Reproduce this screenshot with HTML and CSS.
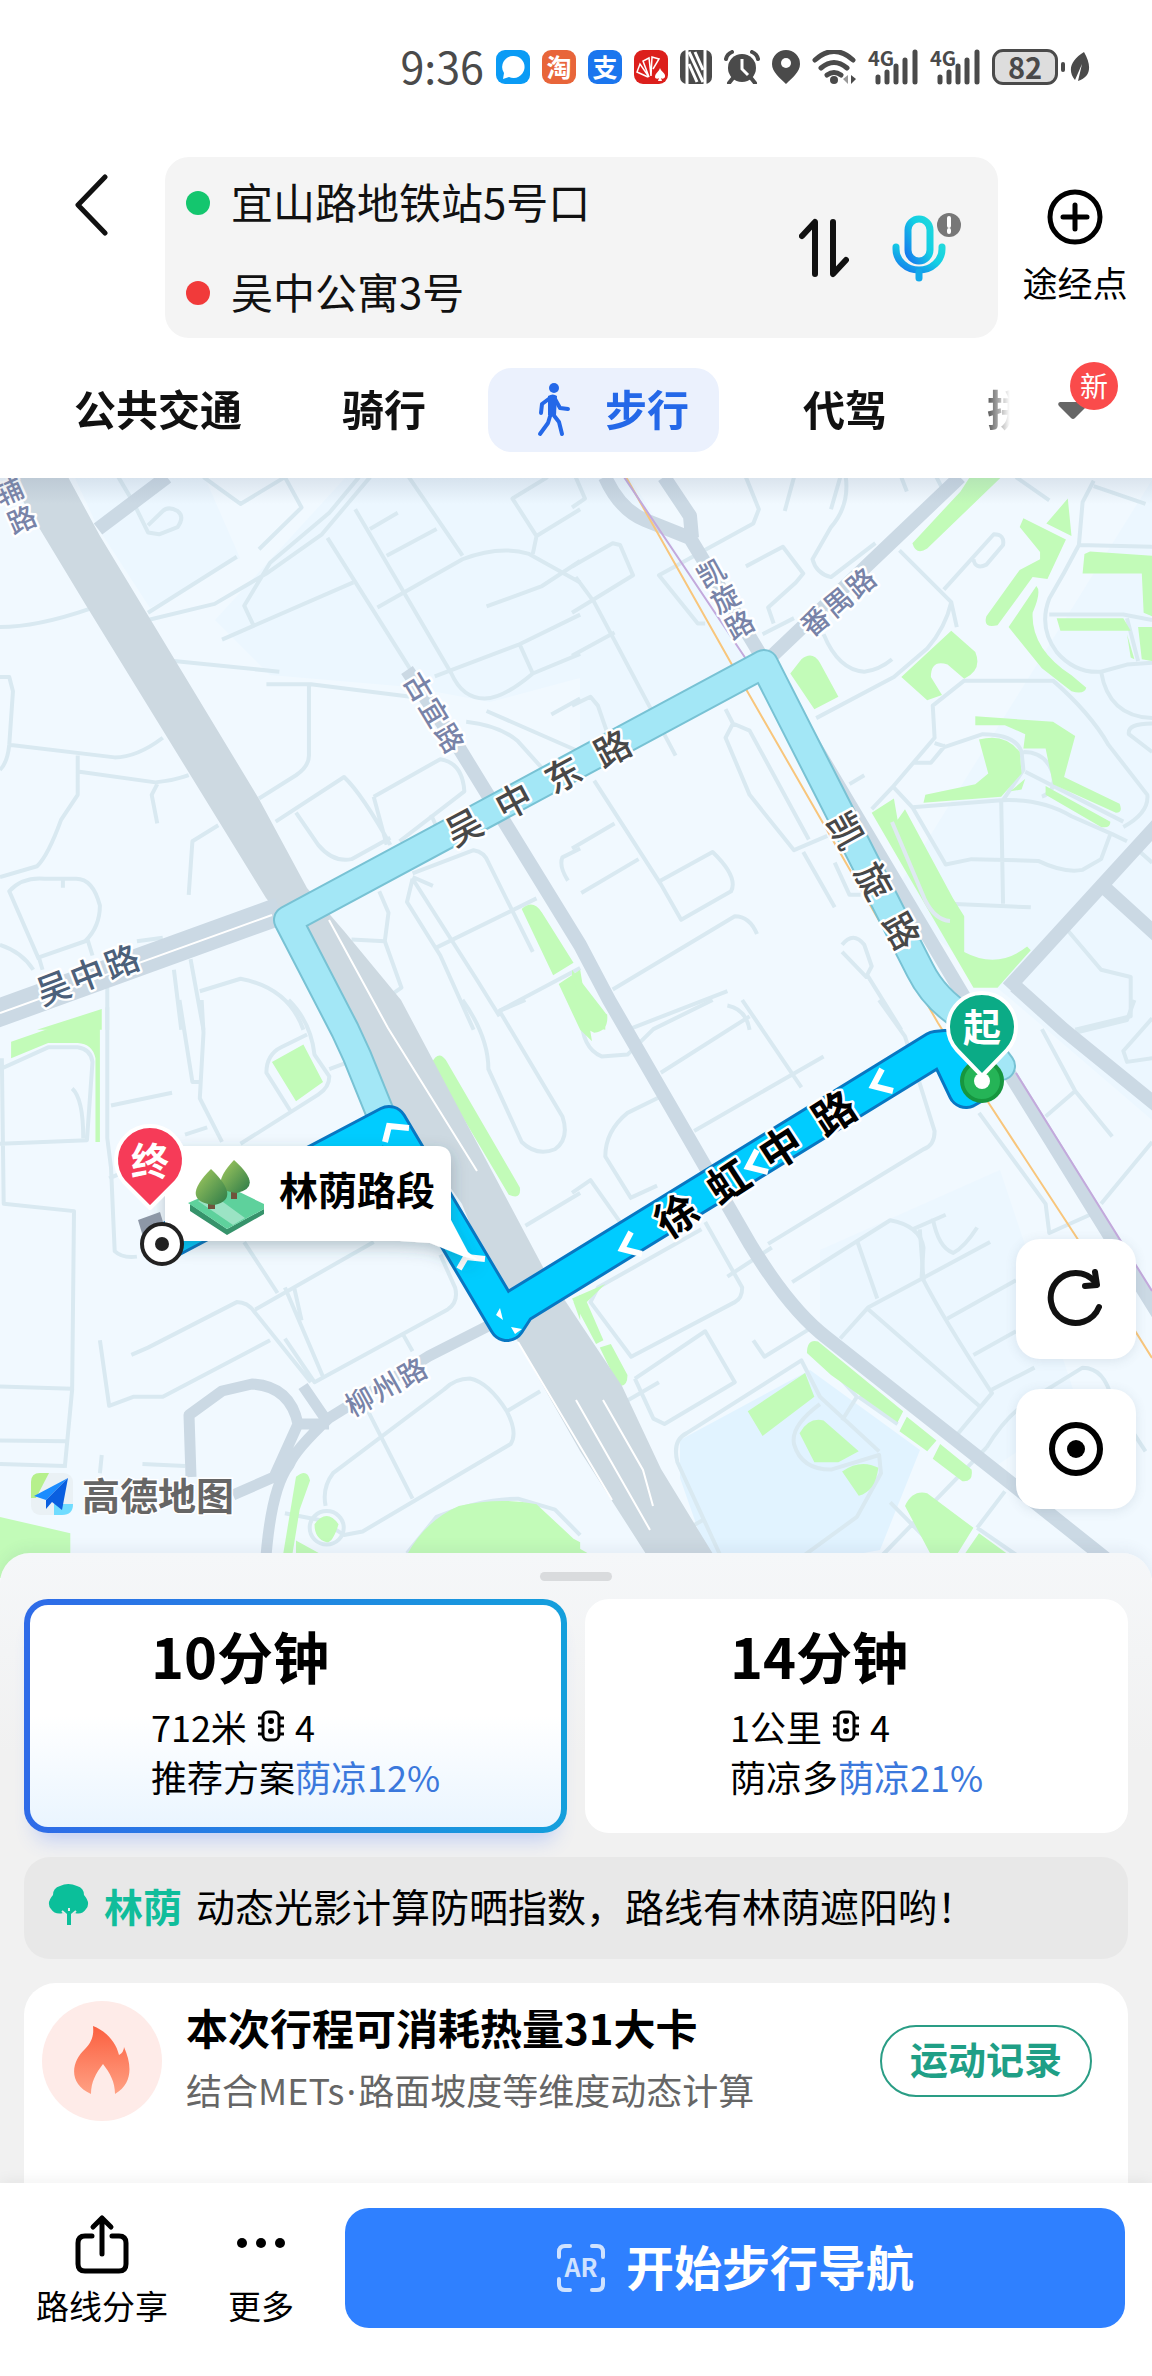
FILE: index.html
```html
<!DOCTYPE html>
<html lang="zh-CN">
<head>
    <meta charset="UTF-8">
    <meta name="viewport" content="width=device-width, initial-scale=1.0">
    <title>步行路线</title>
    <link rel="stylesheet" href="styles.css">
</head>
<body>

<div class="status-bar">
    <span class="status-time">9:36</span>
    <svg class="app-icon" viewBox="0 0 34 34"><rect width="34" height="34" rx="9" fill="#0a9bf5"/><path d="M17 6a11 11 0 1 1-4 21l-6 2 1-6A11 11 0 0 1 17 6z" fill="#fff"/></svg>
    <svg class="app-icon" viewBox="0 0 34 34"><rect width="34" height="34" rx="9" fill="#e8653a"/><text x="17" y="16" class="app-char">淘</text></svg>
    <svg class="app-icon" viewBox="0 0 34 34"><rect width="34" height="34" rx="9" fill="#1b76ee"/><text x="17" y="16" class="app-char">支</text></svg>
    <svg class="app-icon" viewBox="0 0 34 34"><rect width="34" height="34" rx="9" fill="#dc1f1c"/><path d="M14 27 3 22l3-8 9 13-6-16 6-3 2 18 1-19 7 2-6 10" fill="none" stroke="#fff" stroke-width="1.5"/><path d="M26 18c1 4 6 5 5 9-1 2-3 2-4 1l1 3h-4l1-3c-1 1-4 1-4-1 0-4 4-5 5-9z" fill="#fff"/></svg>
    <svg class="nfc-icon" viewBox="0 0 32 34"><rect width="32" height="34" rx="7" fill="#4a4a4a"/><path d="M7 0v34M25 0v34" stroke="#fff" stroke-width="3"/><path d="M9 2l14 30M9 14l8 18M15 2l8 18" stroke="#fff" stroke-width="3"/></svg>
    <svg class="alarm-icon" viewBox="0 0 36 34"><circle cx="18" cy="18" r="14" fill="#4a4a4a"/><path d="m9 28-4 5m22-5 4 5M2 9q1-5 6-7m26 7q-1-5-6-7" stroke="#4a4a4a" stroke-width="4" stroke-linecap="round" fill="none"/><path d="M18 9v10l6 6" stroke="#fff" stroke-width="3" fill="none"/></svg>
    <svg class="pin-icon" viewBox="0 0 28 34"><path d="M14 0a14 14 0 0 1 14 14c0 8-8 14-14 20C8 28 0 22 0 14A14 14 0 0 1 14 0z" fill="#4a4a4a"/><circle cx="14" cy="13" r="5" fill="#fff"/></svg>
    <svg class="wifi-icon" viewBox="0 0 44 34"><g fill="none" stroke="#4a4a4a" stroke-width="5" stroke-linecap="round"><path d="M3 10q19-17 38 0M9 18q13-11 26 0M15 25q7-5 14 0"/></g><circle cx="22" cy="30" r="4" fill="#4a4a4a"/><path d="m36 25-5 4 5 5z" fill="#999"/><path d="m39 25 5 4-5 5z" fill="#4a4a4a"/></svg>
    <svg class="signal-icon" viewBox="0 0 50 34"><text x="0" y="16" class="signal-text">4G</text><path d="M10 27v5M19 22v10M28 16v16M37 10v22M47 2v30" stroke="#4a4a4a" stroke-width="5" stroke-linecap="round"/></svg>
    <svg class="signal-icon" viewBox="0 0 50 34"><text x="0" y="16" class="signal-text">4G</text><path d="M10 27v5M19 22v10M28 16v16M37 10v22M47 2v30" stroke="#4a4a4a" stroke-width="5" stroke-linecap="round"/></svg>
    <span class="battery">82</span>
    <svg class="leaf-icon" viewBox="0 0 20 30"><path d="M14 0c8 14 7 25-6 29l4-17-7 16C-3 18 1 8 14 0z" fill="#4a4a4a"/></svg>
</div>

<header class="header">
    <div class="search-row">
        <button class="back-button" aria-label="返回">
            <svg width="36" height="64" viewBox="0 0 36 64"><path d="M33 4 6 32l27 28" fill="none" stroke="#111" stroke-width="5" stroke-linecap="round" stroke-linejoin="round"/></svg>
        </button>
        <div class="search-box">
            <div class="places">
                <label class="place"><span class="dot dot-start"></span><input type="text" aria-label="起点" value="宜山路地铁站5号口"></label>
                <label class="place"><span class="dot dot-end"></span><input type="text" aria-label="终点" value="吴中公寓3号"></label>
            </div>
            <button class="swap-button" aria-label="交换起终点">
                <svg width="50" height="60" viewBox="0 0 50 60"><path d="M3 18 16 4v52M47 42 34 56V4" fill="none" stroke="#111" stroke-width="6" stroke-linecap="round" stroke-linejoin="round"/></svg>
            </button>
            <button class="mic-button" aria-label="语音输入">
                <svg width="74" height="72" viewBox="0 0 74 72">
                    <defs>
                        <linearGradient id="mic" x1="0" y1="1" x2="1" y2="0"><stop offset="0" stop-color="#1677ee"/><stop offset=".6" stop-color="#12cfe4"/><stop offset="1" stop-color="#20d8dc"/></linearGradient>
                    </defs>
                    <rect x="21" y="7" width="22" height="42" rx="11" fill="none" stroke="url(#mic)" stroke-width="7"/>
                    <path d="M9 35v2a23 21 0 0 0 46 0v-2" fill="none" stroke="url(#mic)" stroke-width="7" stroke-linecap="round"/>
                    <path d="M32 60v6" stroke="#12a9ea" stroke-width="7" stroke-linecap="round"/>
                    <circle cx="62" cy="13" r="12" fill="#777"/>
                    <path d="M62 6v8M62 18v2" stroke="#fff" stroke-width="4" stroke-linecap="round"/>
                </svg>
            </button>
        </div>
        <button class="waypoint-button">
            <svg width="56" height="56" viewBox="0 0 56 56"><circle cx="28" cy="28" r="25" fill="none" stroke="#000" stroke-width="5"/><path d="M28 16v24M16 28h24" stroke="#000" stroke-width="5" stroke-linecap="round"/></svg>
            <span>途经点</span>
        </button>
    </div>

    <nav class="tabs">
        <div class="tab-list">
            <button class="tab">公共交通</button>
            <button class="tab">骑行</button>
            <button class="tab tab-active">
                <svg width="36" height="54" viewBox="0 0 36 54"><circle cx="18" cy="5" r="5" fill="#2468e8"/><path d="M14 15 6 21 5 30M19 16l5 9 8 1M15 30l-3 10-8 11M16 30l7 9 3 12" fill="none" stroke="#2468e8" stroke-width="4" stroke-linecap="round" stroke-linejoin="round"/><path d="M12 13q5-3 9 0l-1 19h-8z" fill="#2468e8"/></svg>
                <span>步行</span>
            </button>
            <button class="tab">代驾</button>
            <button class="tab">拼车</button>
        </div>
        <button class="tab-more" aria-label="更多出行方式">
            <svg width="32" height="18" viewBox="0 0 32 18"><path d="M3 1h26q3 1 1 4L18 17q-2 2-4 0L2 5Q0 2 3 1z" fill="#666"/></svg>
            <span class="new-badge">新</span>
        </button>
    </nav>
</header>

<main>
    <div class="map-area">
        <svg class="map" viewBox="0 478 1152 1100" role="img" aria-label="步行路线地图">
            <defs>
                <linearGradient id="topShade" x1="0" y1="0" x2="0" y2="1"><stop offset="0" stop-color="#8090a8" stop-opacity=".2"/><stop offset="1" stop-color="#8090a8" stop-opacity="0"/></linearGradient>
                <linearGradient id="treeFill" x1="0" y1="0" x2="1" y2="1"><stop offset="0" stop-color="#a6cc5f"/><stop offset="1" stop-color="#2c7a48"/></linearGradient>
                <filter id="shadow" x="-20%" y="-30%" width="140%" height="180%"><feDropShadow dx="0" dy="6" stdDeviation="8" flood-color="#345" flood-opacity=".3"/></filter>
            </defs>
            <rect x="0" y="478" width="1152" height="1100" fill="#f1f9ff"/>

            <!-- blocks -->
            <g fill="#ecf7ff">
                <path d="M75 478h130l35 80-90 50-52-80zM215 620l130-142h235v200l-90 24-80-15-140-12z"/>
                <path d="M580 478h50l120 190-170 80zM890 900l262-420v640l-140-120z"/>
                <path d="M820 1250l180-80 80 240-90 60-170-140z"/>
            </g>
            <path d="M680 1440 810 1370l110 80-40 100-150 28h-15l-35-100z" fill="#e1f3ff"/>

            <!-- north west tile -->
            <g class="minor" transform="translate(0 470) scale(.37 .357)">
                <path d="M320 20 360 90 400 175 430 180 480 160Q500 130 480 115 455 100 440 115L400 155"/>
                <path d="M550 20 650 95 770 20 815 105 700 222M400 420 580 375 720 290 870 180 1000 20M970 20 890 120 730 260 660 380 685 435M400 400 640 243M600 475 955 315"/>
                <path d="M960 110 1220 570Q1250 640 1310 640 1360 640 1440 570L1568 515M885 190 1110 560M1105 20 1250 240M1000 165 1075 120M1045 240 1180 165M1020 385 1250 250Q1350 210 1430 235L1568 315M1315 382 1465 325 1568 255M1175 578 1400 490 1568 405M1405 490 1440 570M1440 235 1450 185 1568 110M1450 185 1385 80 1480 20"/>
                <path d="M0 440Q100 440 240 390M470 535 755 565M720 600 840 600 1110 635M835 605V800Q835 830 800 855L700 920M0 580H25L35 620 25 770Q20 820 0 840M30 770 310 805Q370 805 440 750M210 800V910L165 980Q130 1080 100 1110L0 1140M215 845 420 875Q470 870 510 855M425 880 410 910 425 990"/>
                <path d="M1260 705Q1350 715 1400 760L1465 835M1315 675 1568 790M1490 685 1568 640M745 985 930 860Q980 910 1055 1050M800 960 860 1050Q900 1100 950 1090L1055 1030M1010 915 1190 810Q1250 820 1255 900L1080 1040M1010 915 1045 1050M590 995 520 1040 510 1190M1165 965 1180 1000"/>
                <path d="M105 1370 25 1180Q60 1140 120 1145H200Q250 1140 270 1220 270 1280 230 1320L105 1365M170 1150V1170M0 1330Q60 1350 90 1400M235 1310 250 1360M105 1365 115 1400M370 1320 440 1310M470 1400 490 1568M515 1370 550 1568M540 1460 650 1425Q780 1450 820 1568M290 1450V1568"/>
                <path d="M1025 1180 1050 1240 1040 1320 1085 1450 1050 1475M950 1315 1040 1320M1115 1140 1170 1165M1115 1145 1290 1430 1350 1530M1115 1145 1100 1210 1190 1360 1280 1568M1115 1130 1280 1065Q1310 1070 1320 1100L1440 1350M1175 1340 1450 1200M1350 1515 1568 1395M1568 1060 1520 1085Q1510 1110 1535 1150"/>
            </g>

            <!-- north east tile -->
            <g class="minor" transform="translate(572 470) scale(.37 .357)">
                <path d="M0 270 110 205 130 210 165 295 0 400M10 300 60 370 280 800M0 520 115 455M10 20 35 80 0 105M470 20 505 110 490 150 235 295 340 430 360 430M470 270 570 215 625 290 605 315 530 385 545 430M600 20 575 115M700 110 725 20M740 20Q750 100 700 160L650 250Q660 290 700 300L820 205M515 460 600 415M680 460Q720 560 790 565 830 560 865 530M890 20 905 60M985 20 1000 50M1200 20 1290 85"/>
                <path d="M885 225 1025 370Q1010 440 960 500L870 580 660 695M1025 370 1040 440M1005 335 1140 180Q1170 180 1165 210L1120 265Q1090 280 1085 250M1410 30 1380 90 1370 210Q1330 290 1290 360 1260 440 1310 510 1360 570 1430 565L1500 545 1568 540M1410 45 1550 95M1370 210 1568 215M1290 405H1490L1568 420M1500 415 1530 535M1430 565Q1450 690 1568 695M1568 710Q1500 710 1505 740L1568 790"/>
                <path d="M810 950 865 890 980 750 975 660 1060 590H1300Q1400 680 1450 770L1555 910Q1560 960 1490 1000M980 765 1010 775 1110 740Q1200 740 1215 790L1220 840 1165 925M925 820 970 820 1010 770M870 890 920 945 1160 925Q1270 920 1350 970L1460 1020 1500 1040M920 945 1010 1105 1080 1090 1260 1095Q1330 1130 1380 1120L1430 1090 1455 1020M1160 925 1165 1215M1220 790Q1280 790 1300 850 1310 900 1270 915M1225 845 1490 985M1020 1215 1240 1225M1525 1060 1568 1100"/>
                <path d="M0 660 50 635 70 660 100 750M60 870 240 1160 295 1260 430 1180Q450 1140 380 1070L240 1150M0 1060 115 990M25 1185 180 1090M110 1455 440 1250Q480 1250 500 1300M420 1500Q470 1510 480 1568M150 1568 420 1460M415 670 435 710 415 750 480 910 600 1065 690 1025M435 710 480 730 640 1035M625 1070 710 1225M710 1100 750 1190 780 1190M790 855 750 880M730 1330Q760 1290 790 1330L810 1390 795 1420 730 1350M795 1410 890 1568M1340 1290 1430 1400 1510 1420V1530L1360 1568"/>
            </g>

            <!-- south west tile -->
            <g class="minor" transform="translate(0 1000) scale(.37 .364)">
                <path d="M0 190 130 130H210Q245 135 250 170L235 385 0 395M5 160 10 560 200 580 195 1070 175 1285M0 1062 195 1068M0 1210 180 1212M0 1275 175 1280M195 243Q225 270 225 380M290 20V380L300 460 310 690Q330 710 370 705M485 0 520 225H540M545 0 550 90 540 270 600 390M300 290 465 255M500 370 560 350M295 490 340 470"/>
                <path d="M780 0Q840 60 850 150L890 210Q890 240 860 260L650 395M785 305 720 200Q720 150 760 130L830 95M890 190 930 175M355 975 400 955 640 830Q670 830 690 860L840 1050M690 850 1010 665M660 665 750 805M770 790 875 1040M795 790 815 880M270 935 295 1115 360 1090H440L730 935M770 930 850 1050 1210 850Q1240 830 1230 790L1190 700M1090 920 1115 965M275 1250 270 1300M385 1275 500 1280M770 1410 870 1430 930 1470 980 1460 1380 1220Q1400 1190 1370 1130L1460 1075M1370 1130Q1320 1050 1270 1040 1230 1040 1200 1070L900 1300Q870 1340 880 1390M985 1110 1115 1370M1100 1520 1180 1420Q1300 1370 1400 1370L1500 1400 1568 1470"/>
                <path d="M1250 0Q1320 100 1320 190L1410 390Q1450 430 1500 410 1540 380 1520 320L1350 30 1420 0M1420 620 1568 530"/>
                <circle cx="883" cy="1450" r="46"/>
            </g>

            <!-- south east tile -->
            <g class="minor" transform="translate(572 1000) scale(.37 .364)">
                <path d="M25 20Q20 130 80 155L150 150 220 80 380 0M460 0 620 240M240 200 480 45M160 545 90 430Q90 360 150 310L240 265M330 360 680 155M155 545 230 510M0 530 50 495 130 610M830 0 900 100 980 360Q980 400 950 410L530 670M595 775 860 605Q940 620 950 680L945 760Q1000 870 1135 1080L1040 1195M725 930 800 845 1130 665M795 845 1100 1115M770 660 825 820M920 630 1010 590M975 600Q990 680 1030 695 1060 680 1095 625M1015 875 1200 770M1085 975 1200 910M1135 1070 1250 1010M540 680 420 760M360 610 460 790Q460 820 440 830L160 980 50 830 70 790 350 630"/>
                <path d="M150 1100 235 1050M170 1040 360 910 440 1050 250 1165 220 1150 170 1040M490 935 520 980 640 905M400 1524 285 1270Q270 1210 310 1190L620 990 670 1090 830 1240M690 1000 770 1090 730 1155M670 1110Q590 1170 600 1220 620 1290 700 1290L830 1250 835 1300 770 1420 630 1524M1120 1230Q1180 1130 1260 1085L1380 1010Q1440 1010 1460 1100L1550 1240M1120 1230 840 1524M860 1380 1000 1524M1095 1450 1170 1350M1095 1450 1200 1524M300 1460 360 1425M775 1090 880 1165M940 630 950 770"/>
                <path d="M1100 310 1280 560 1290 640 1400 590M1280 320 1360 250 1270 80M1360 250 1460 375M1430 560 1568 390M1360 90 1500 55 1520 0M1568 160 1500 170 1490 140 1568 50"/>
            </g>

            <!-- greenery -->
            <g fill="#c2fbb8">
                <path transform="translate(0 470) scale(.37 .357)" d="M1410 1230Q1440 1200 1465 1240L1550 1380 1495 1415zM1510 1440 1568 1400 1600 1600 1568 1568zM275 1510V1568H100z"/>
                <path transform="translate(572 470) scale(.37 .357)" d="M1050 60 1075 20H1160L960 220Q930 240 920 205zM1340 80 1350 185 1282 150zM1220 135 1335 195 1285 305 1245 300 1150 435Q1110 445 1120 410L1210 280 1265 250 1265 230 1210 160zM1180 440 1255 325Q1270 340 1245 400 1240 500 1350 575L1390 610Q1385 630 1350 620L1270 555zM1385 235 1400 228 1568 240V410L1545 400 1540 290H1380zM1310 415H1490L1510 450H1320zM1500 460 1520 530 1510 525zM1530 440H1568V535L1540 530zM590 570 620 530Q650 505 670 540L720 635 655 670zM890 580 1025 450 1090 510Q1110 560 1060 585L1015 545Q970 530 970 580L1000 630 960 645zM1090 690 1300 705 1360 745 1330 860 1480 935Q1490 960 1470 960L1300 880 1280 780 1220 780 1225 740 1170 715 1090 715zM1100 755Q1170 735 1210 790L1215 850 1160 915 950 932 955 910 1090 880 1125 850zM1185 900 1225 865 1215 895zM1280 885 1455 985Q1455 1005 1430 1000L1280 910zM810 960 870 920 880 980 900 950 1030 1200 1060 1250 1060 1350Q1150 1400 1230 1335L1240 1345 1150 1450H1085zM0 1400 90 1520 90 1568 50 1560 0 1420z"/>
                <path transform="translate(0 1000) scale(.37 .364)" d="M30 115 270 30V390H258V160Q250 120 210 118H130L30 160zM735 170 820 122 873 225 800 278zM1165 175Q1185 135 1205 165L1405 515Q1410 550 1375 535zM1550 830 1568 810V880zM800 1310Q830 1285 838 1320L810 1400 790 1524H765zM0 1420 190 1465V1600H0zM1100 1524Q1150 1430 1240 1390 1350 1365 1450 1385L1550 1480 1568 1490V1524zM800 1524V1485L870 1524zM850 1440Q883 1395 915 1440 900 1490 883 1490 850 1480 850 1440z"/>
                <path transform="translate(572 1000) scale(.37 .364)" d="M0 0 40 0 95 40Q100 85 60 90L40 80zM0 820 90 780 40 830 85 935 65 945zM75 955 105 945 150 1030Q150 1065 125 1060zM635 970Q635 930 665 938L895 1130 880 1160 700 1030zM905 1145 985 1210 960 1240 885 1185zM995 1220 1080 1290Q1085 1325 1055 1322L975 1260zM475 1130 630 1025 655 1090 515 1198zM615 1190Q640 1145 680 1155L775 1240 720 1270H655zM730 1295Q780 1260 828 1285 820 1350 775 1362zM900 1390Q920 1345 960 1355L1085 1450 1040 1524H970zM1100 1465 1180 1524H1060zM0 1495 50 1524H0z"/>
            </g>
            <path d="M892 822 925 900Q935 920 950 921" fill="none" stroke="#dfe9f2" stroke-width="4"/>

            <!-- main roads -->
            <path d="M9 478 87 607 266 898 289 927 370 1073 462 1204 518 1342 580 1451 646 1554 660 1580H725L713 1554 661 1469 622 1386 544 1269 401 1000 344 931 307 888 259 799 100 536 68 477z" fill="#cdd9e1"/>
            <g class="road">
                <path class="road-wide" d="M-10 1016 280 911"/>
                <path d="M98 529 167 477M407 670 459 748 580 945 609 1000 750 1244Q790 1310 827 1338L1012 1484 1135 1582"/>
                <path d="M960 477 772 656M605 477Q620 510 645 520L690 538 757 649 960 990 1009 1073 1165 1325M664 477 690 516 692 538"/>
                <path d="M1160 822 1008 988M1105 888 1160 938M1015 986 1064 1030 1160 1108"/>
                <path class="road-small" d="M492 1324 429 1356 329 1418Q295 1450 289 1465 270 1490 265 1570M329 1424 298 1424Q290 1386 252 1384L222 1391 189 1415 191 1477M298 1424 274 1477 233 1495M303 1386 329 1424"/>
            </g>
            <path d="M0 1013 272 915M329 920 388 1028 477 1171M518 1342 612 1500M576 1400 650 1530M603 1400 643 1470 653 1506" fill="none" stroke="#fff" stroke-width="2"/>
            <path d="M626 477 731 663 938 1023 988 1102 1077 1238 1152 1358" class="metro-orange"/>
            <path d="M624 477 746 659M1016 1073 1152 1291" class="metro-purple"/>

            <!-- alternative route -->
            <path class="alt-edge" d="M385 1125 357 1056 345 1030 288 920 764 664 920 970Q935 1000 965 1018L1001 1066"/>
            <path class="alt-line" d="M385 1125 357 1056 345 1030 288 920 764 664 920 970Q935 1000 965 1018L1001 1066"/>

            <!-- selected route -->
            <path class="route-edge" d="M162 1244 389 1124 507 1323 518 1306 936 1049 946 1048 966 1090 982 1081"/>
            <path class="route-line" d="M162 1244 389 1124 507 1323 518 1306 936 1049 946 1048 966 1090 982 1081"/>
            <path class="route-arrow" d="M882 1069 873 1086 893 1091M757 1150 748 1167 768 1172M631 1232 622 1249 642 1254M385 1142 389 1126 409 1128M459 1269 466 1257 485 1259"/>
            <path d="m500 1308 3 12-7-5zM511 1327l11 2-7 5z" fill="#fff"/>

            <!-- road names -->
            <g class="road-name">
                <text class="vertical" transform="translate(9 491) rotate(-24)" x="0" y="0 31">辅路</text>
                <text transform="translate(420 686) rotate(59)" x="0 30 60" y="0">古宜路</text>
                <text class="vertical" transform="translate(711 573) rotate(-29)" x="0" y="0 29 59">凯旋路</text>
                <text transform="translate(814 620) rotate(-40)" x="0 30 60" y="0">番禺路</text>
                <text transform="translate(359 1400) rotate(-29)" x="0 30 60" y="0">柳州路</text>
            </g>
            <text class="road-name-main" transform="translate(53 986) rotate(-21)" x="0 36 73" y="0">吴中路</text>
            <text class="road-name-alt" transform="translate(463 825) rotate(-28)" x="0 56 112 168" y="0">吴中东路</text>
            <text class="road-name-alt" transform="translate(848 829) rotate(61)" x="0 58 115" y="0">凯旋路</text>
            <text class="road-name-route" transform="translate(675 1213) rotate(-33)" x="0 62 124 188" y="0">徐虹中路</text>

            <!-- start pin -->
            <circle cx="982" cy="1081" r="20" fill="#25b457" stroke="#16963f" stroke-width="4"/>
            <circle cx="982" cy="1081" r="8" fill="#fff"/>
            <path d="M982 1076 957 1050A34 34 0 1 1 1007 1050z" fill="#0bab86" stroke="#fff" stroke-width="4" stroke-linejoin="round"/>
            <text class="pin-text" x="982" y="1024">起</text>

            <!-- shaded section callout -->
            <g filter="url(#shadow)">
                <path d="M181 1146H437Q451 1146 451 1160V1220L468 1252 478 1260 462 1256 430 1243 400 1241H181Q165 1241 165 1225V1162Q165 1146 181 1146z" fill="#fff"/>
            </g>
            <path d="m190 1204 37 25 37-20v5l-37 21-37-24z" fill="#36936b"/>
            <path d="m188 1203 39-17 37 18v5l-37 20z" fill="#5ed19c"/>
            <path d="m198 1201 35 24 12-7-33-24z" fill="#9be3c4"/>
            <path d="M208 1196h7v13h-7zM231 1186h6v13h-6z" fill="#70533c"/>
            <path d="M234 1160q30 27 3 33-31-3-3-33z" fill="url(#treeFill)"/>
            <path d="M211 1169q31 30 3 36-35-4-3-36z" fill="url(#treeFill)"/>
            <text class="callout-text" x="279" y="1188">林荫路段</text>

            <!-- end pin -->
            <path d="m138 1220 22-8 6 20-22 8z" fill="#8d97a6"/>
            <circle cx="162" cy="1244" r="20" fill="#fff" stroke="#222" stroke-width="4"/>
            <circle cx="162" cy="1244" r="7" fill="#222"/>
            <path d="M150 1208 124 1182A34 34 0 1 1 176 1182z" fill="#f63b58" stroke="#fff" stroke-width="4" stroke-linejoin="round"/>
            <text class="pin-text" x="150" y="1158">终</text>

            <!-- brand -->
            <rect x="31" y="1473" width="42" height="42" rx="9" fill="#eaf1f5"/>
            <path d="M40 1473h9l-13 25h-5v-16q0-9 9-9z" fill="#b6f08c"/>
            <path d="M54 1515v-11h19q0 11-11 11z" fill="#6fdcff"/>
            <path d="m68 1478-34 18 12 4z" fill="#1c8cff"/>
            <path d="m68 1478-22 22v9l6-7 10 8z" fill="#0a5fe0"/>
            <text class="brand" x="82" y="1493">高德地图</text>

            <rect x="0" y="478" width="1152" height="26" fill="url(#topShade)"/>
        </svg>
        <div class="map-controls">
            <button aria-label="刷新">
                <svg width="60" height="60" viewBox="0 0 60 60"><path d="M53 38A25 25 0 1 1 49 13" fill="none" stroke="#111" stroke-width="6" stroke-linecap="round"/><path d="m49 3 2 13-12 1" fill="none" stroke="#111" stroke-width="6" stroke-linecap="round" stroke-linejoin="round"/></svg>
            </button>
            <button aria-label="定位">
                <svg width="60" height="60" viewBox="0 0 60 60"><circle cx="30" cy="30" r="24" fill="none" stroke="#000" stroke-width="6"/><circle cx="30" cy="30" r="9" fill="#000"/></svg>
            </button>
        </div>
    </div>

    <section class="panel">
        <div class="handle"></div>

        <div class="plans">
            <button class="plan plan-active">
                <span class="plan-info">
                    <strong class="plan-time">10分钟</strong>
                    <span class="plan-line">712米
                        <svg width="28" height="32" viewBox="0 0 28 32"><rect x="6" y="2" width="16" height="28" rx="5" fill="none" stroke="#000" stroke-width="3"/><path d="M1 8h4M1 16h4M1 24h4M23 8h4M23 16h4M23 24h4" stroke="#000" stroke-width="3"/><circle cx="14" cy="11" r="3"/><circle cx="14" cy="21" r="3"/></svg>4</span>
                    <span class="plan-line">推荐方案<em>荫凉12%</em></span>
                </span>
            </button>
            <button class="plan">
                <span class="plan-info">
                    <strong class="plan-time">14分钟</strong>
                    <span class="plan-line">1公里
                        <svg width="28" height="32" viewBox="0 0 28 32"><rect x="6" y="2" width="16" height="28" rx="5" fill="none" stroke="#000" stroke-width="3"/><path d="M1 8h4M1 16h4M1 24h4M23 8h4M23 16h4M23 24h4" stroke="#000" stroke-width="3"/><circle cx="14" cy="11" r="3"/><circle cx="14" cy="21" r="3"/></svg>4</span>
                    <span class="plan-line">荫凉多<em>荫凉21%</em></span>
                </span>
            </button>
        </div>

        <div class="tip">
            <svg width="42" height="42" viewBox="0 0 42 42"><path d="M12 2q8-4 17 0 7 2 7 9 7 8 2 14-4 6-11 4-6 4-12 0-8 2-12-4-5-6 2-14 0-7 7-9z" fill="#0bbf9a"/><path d="M21 24v6M21 33l-7-6M21 33l7-6" stroke="#e8e8e8" stroke-width="2"/><path d="M21 27v14" stroke="#0bbf9a" stroke-width="4"/></svg>
            <strong>林荫</strong>
            <span>动态光影计算防晒指数，路线有林荫遮阳哟！</span>
        </div>

        <div class="calorie">
            <div class="flame">
                <svg width="58" height="70" viewBox="0 0 58 70">
                    <defs><linearGradient id="flame" x1="0" y1="0" x2="0" y2="1"><stop offset="0" stop-color="#fb5f3f"/><stop offset="1" stop-color="#ffa184"/></linearGradient></defs>
                    <path d="M20 0C33 5 43 16 46 29q5-3 5-8c8 18 9 36-9 47 0-12-5-21-12-30-7 9-12 18-12 30C-5 58-2 36 12 23 19 16 21 9 20 0z" fill="url(#flame)"/>
                </svg>
            </div>
            <div class="calorie-text">
                <h2>本次行程可消耗热量31大卡</h2>
                <p>结合METs<span class="mid-dot">·</span>路面坡度等维度动态计算</p>
            </div>
            <button class="record-button">运动记录</button>
        </div>
    </section>
</main>

<footer class="bottom-bar">
    <button class="bottom-item">
        <svg width="54" height="60" viewBox="0 0 54 60"><path d="M17 22h-7q-7 0-7 7v21q0 7 7 7h34q7 0 7-7V29q0-7-7-7h-7M27 40V4M18 13l9-9 9 9" fill="none" stroke="#000" stroke-width="5" stroke-linecap="round" stroke-linejoin="round"/></svg>
        路线分享
    </button>
    <button class="bottom-item">
        <svg width="54" height="60" viewBox="0 0 54 60"><circle cx="8" cy="29" r="5"/><circle cx="27" cy="29" r="5"/><circle cx="46" cy="29" r="5"/></svg>
        更多
    </button>
    <button class="start-button">
        <svg width="50" height="50" viewBox="0 0 50 50"><path d="M3 14V9q0-6 6-6h5M36 3h5q6 0 6 6v5M47 36v5q0 6-6 6h-5M14 47H9q-6 0-6-6v-5" fill="none" stroke="#cfe2ff" stroke-width="4" stroke-linecap="round"/><text x="25" y="34" class="ar-text">AR</text></svg>
        <span>开始步行导航</span>
    </button>
</footer>

</body>
</html>
```
FILE: styles.css
```css
* {
    box-sizing: border-box;
}
body {
    margin: 0;
    min-height: 100vh;
    display: flex;
    flex-direction: column;
    font-family: "Noto Sans CJK SC", sans-serif;
    color: #000;
    background-color: #fff;
}
button,
input {
    font: inherit;
    color: inherit;
    border: none;
    background: none;
    padding: 0;
    margin: 0;
}
button {
    cursor: pointer;
}
svg {
    display: block;
    flex: none;
}

/* Status bar */
.status-bar {
    display: flex;
    align-items: center;
    justify-content: flex-end;
    gap: 12px;
    height: 134px;
    padding: 0 62px 0 0;
    color: #4a4a4a;
}
.status-time {
    padding-bottom: 4px;
    font-size: 43px;
    line-height: 60px;
}
.app-icon {
    width: 34px;
    height: 34px;
}
.app-char {
    font-size: 25px;
    font-weight: 700;
    fill: #fff;
    text-anchor: middle;
    dominant-baseline: central;
}
.nfc-icon {
    width: 32px;
    height: 34px;
}
.alarm-icon {
    width: 36px;
    height: 34px;
}
.pin-icon {
    width: 28px;
    height: 34px;
}
.wifi-icon {
    width: 44px;
    height: 34px;
}
.signal-icon {
    width: 50px;
    height: 34px;
    overflow: visible;
}
.signal-text {
    font-size: 20px;
    font-weight: 700;
    fill: #4a4a4a;
}
.battery {
    position: relative;
    width: 66px;
    height: 36px;
    border: 3px solid #4a4a4a;
    border-radius: 11px;
    background-color: #ddd;
    font-size: 29px;
    font-weight: 700;
    line-height: 28px;
    text-align: center;
}
.battery::after {
    content: "";
    position: absolute;
    right: -10px;
    top: 10px;
    width: 4px;
    height: 10px;
    border-radius: 2px;
    background-color: #4a4a4a;
}
.leaf-icon {
    width: 20px;
    height: 30px;
}

/* Header */
.header {
    padding: 23px 0 26px;
}
.search-row {
    display: flex;
    align-items: center;
    padding-left: 72px;
}
.back-button {
    width: 93px;
    align-self: flex-start;
    padding-top: 16px;
}
.search-box {
    flex: 1;
    display: flex;
    align-items: center;
    height: 181px;
    padding: 0 37px 0 21px;
    border-radius: 24px;
    background-color: #f4f4f4;
}
.places {
    flex: 1;
    display: flex;
    flex-direction: column;
    gap: 30px;
}
.place {
    display: flex;
    align-items: center;
    gap: 21px;
}
.place input {
    flex: 1;
    min-width: 0;
    height: 60px;
    padding-bottom: 4px;
    font-size: 42px;
    color: #111;
}
.dot {
    width: 24px;
    height: 24px;
    border-radius: 50%;
}
.dot-start {
    background-color: #14c66e;
}
.dot-end {
    background-color: #f13a3a;
}
.swap-button {
    margin-right: 38px;
}
.waypoint-button {
    width: 154px;
    display: flex;
    flex-direction: column;
    align-items: center;
    gap: 12px;
    font-size: 35px;
    line-height: 50px;
}

/* Travel tabs */
.tabs {
    display: flex;
    align-items: center;
    margin-top: 30px;
}
.tab-list {
    flex: 1;
    min-width: 0;
    display: flex;
    overflow: hidden;
    padding-left: 24px;
    -webkit-mask-image: linear-gradient(to left, transparent, #000 32px);
    mask-image: linear-gradient(to left, transparent, #000 32px);
}
.tab {
    flex: none;
    height: 84px;
    padding: 0 50px 6px;
    font-size: 42px;
    font-weight: 700;
    color: #111;
}
.tab-active {
    display: flex;
    align-items: center;
    gap: 33px;
    margin: 0 34px 0 12px;
    padding: 0 30px 0 48px;
    border-radius: 24px;
    background-color: #ebf1fd;
    color: #2468e8;
}
.tab-active span {
    padding-bottom: 6px;
}
.tab-more {
    position: relative;
    width: 142px;
    height: 84px;
    padding-left: 47px;
}
.new-badge {
    position: absolute;
    left: 60px;
    top: -6px;
    width: 48px;
    height: 48px;
    border-radius: 50%;
    background-color: #fa4b4b;
    color: #fff;
    font-size: 28px;
    line-height: 46px;
    text-align: center;
}

/* Map */
.map-area {
    position: relative;
}
.map {
    width: 100%;
    height: auto;
}
.minor path,
.minor circle {
    fill: none;
    stroke: #d9e9f1;
    stroke-width: 4;
    stroke-linejoin: round;
    vector-effect: non-scaling-stroke;
}
.road {
    fill: none;
    stroke: #cbd9e4;
    stroke-width: 14;
    stroke-linejoin: round;
}
.road-wide {
    stroke-width: 28;
}
.road-small {
    stroke-width: 11;
}
.metro-orange {
    fill: none;
    stroke: #f8c67c;
    stroke-width: 2;
}
.metro-purple {
    fill: none;
    stroke: #c3a9dc;
    stroke-width: 2;
}
.alt-edge,
.alt-line,
.route-edge,
.route-line {
    fill: none;
    stroke-linecap: round;
    stroke-linejoin: round;
}
.alt-edge {
    stroke: #78c2d4;
    stroke-width: 30;
}
.alt-line {
    stroke: #a3e7f6;
    stroke-width: 26;
}
.route-edge {
    stroke: #0877c2;
    stroke-width: 38;
}
.route-line {
    stroke: #00ccff;
    stroke-width: 32;
}
.route-arrow {
    fill: none;
    stroke: #fff;
    stroke-width: 6;
}
.road-name,
.road-name-main,
.road-name-alt,
.road-name-route {
    text-anchor: middle;
    dominant-baseline: central;
    stroke: #fff;
    stroke-width: 5;
    stroke-linejoin: round;
    paint-order: stroke;
}
.road-name {
    font-size: 28px;
    font-weight: 500;
    fill: #7883a8;
}
.road-name-main {
    font-size: 34px;
    font-weight: 500;
    fill: #4c607a;
}
.road-name-alt {
    font-size: 36px;
    font-weight: 500;
    fill: #484848;
}
.road-name-route {
    font-size: 42px;
    font-weight: 700;
    fill: #000;
}
.vertical {
    writing-mode: vertical-rl;
}
.pin-text {
    font-size: 38px;
    font-weight: 700;
    fill: #fff;
    text-anchor: middle;
    dominant-baseline: central;
}
.callout-text {
    font-size: 39px;
    font-weight: 700;
    dominant-baseline: central;
}
.brand {
    font-size: 38px;
    font-weight: 700;
    fill: #666;
    stroke: #fff;
    stroke-width: 3;
    paint-order: stroke;
    dominant-baseline: central;
}
.map-controls {
    position: absolute;
    right: 16px;
    bottom: 69px;
    display: flex;
    flex-direction: column;
    gap: 30px;
}
.map-controls button {
    display: flex;
    align-items: center;
    justify-content: center;
    width: 120px;
    height: 120px;
    border-radius: 24px;
    background-color: #fff;
    box-shadow: 0 2px 12px rgba(60, 80, 110, 0.12);
}

/* Bottom panel */
main {
    flex: 1;
    display: flex;
    flex-direction: column;
}
.panel {
    position: relative;
    flex: 1;
    display: flex;
    flex-direction: column;
    gap: 24px;
    margin-top: -25px;
    padding: 19px 24px 0;
    border-radius: 30px 30px 0 0;
    background: linear-gradient(#f5f7f9, #f1f1f1 200px);
    box-shadow: 0 -4px 14px rgba(60, 80, 110, 0.08);
}
.handle {
    width: 72px;
    height: 9px;
    margin: 0 auto -6px;
    border-radius: 5px;
    background-color: #d9dbdd;
}
.plans {
    display: flex;
    gap: 18px;
}
.plan {
    flex: 1;
    display: flex;
    justify-content: center;
    height: 234px;
    padding: 14px 0 0;
    border: 6px solid #fff;
    border-radius: 24px;
    background-color: #fff;
    text-align: left;
}
.plan-active {
    border-color: transparent;
    background: linear-gradient(#fff 50%, #eaf5ff) padding-box, linear-gradient(to right, #2f6be8, #149fdc) border-box;
    box-shadow: 0 18px 20px -12px rgba(70, 120, 255, 0.3);
}
.plan-time {
    display: block;
    font-size: 56px;
    line-height: 72px;
    margin-bottom: 10px;
}
.plan-line {
    display: flex;
    align-items: center;
    gap: 10px;
    height: 50px;
    font-size: 36px;
    line-height: 50px;
}
.plan-line em {
    margin-left: -10px;
    font-style: normal;
    color: #3b78dc;
}
.tip {
    display: flex;
    align-items: center;
    gap: 14px;
    height: 102px;
    padding: 0 24px 6px;
    border-radius: 26px;
    background-color: #e8e8e8;
    font-size: 39px;
}
.tip strong {
    color: #10bd9b;
}
.calorie {
    flex: 1;
    display: flex;
    align-items: flex-start;
    min-height: 200px;
    padding: 18px 36px 0 18px;
    border-radius: 32px 32px 0 0;
    background-color: #fff;
}
.flame {
    display: flex;
    align-items: center;
    justify-content: center;
    width: 120px;
    height: 120px;
    margin-right: 24px;
    border-radius: 50%;
    background-color: #feebe8;
}
.calorie-text {
    flex: 1;
}
.calorie-text h2 {
    margin: 0;
    font-size: 42px;
    line-height: 52px;
}
.calorie-text p {
    margin: 10px 0 0;
    font-size: 36px;
    line-height: 52px;
    color: #666;
}
.mid-dot {
    margin: 0 2px;
    font-family: "Noto Sans", sans-serif;
}
.record-button {
    height: 72px;
    margin-top: 24px;
    padding: 0 28px 6px;
    border: 2px solid #2a9d85;
    border-radius: 36px;
    font-size: 38px;
    font-weight: 700;
    line-height: 60px;
    color: #1f9f86;
}

/* Bottom bar */
.bottom-bar {
    position: relative;
    display: flex;
    padding: 25px 27px 48px 36px;
    background-color: #fff;
    box-shadow: 0 -2px 14px rgba(0, 0, 0, 0.06);
}
.bottom-item {
    display: flex;
    flex-direction: column;
    align-items: center;
    gap: 8px;
    margin-right: 60px;
    padding-top: 6px;
    font-size: 33px;
    line-height: 46px;
}
.bottom-item + .bottom-item {
    margin-right: 51px;
}
.start-button {
    flex: 1;
    display: flex;
    align-items: center;
    justify-content: center;
    gap: 20px;
    height: 120px;
    border-radius: 24px;
    background-color: #2f80ff;
    color: #fff;
    font-size: 48px;
    font-weight: 700;
}
.start-button span {
    padding-bottom: 6px;
}
.ar-text {
    font-size: 25px;
    font-weight: 700;
    fill: #cfe2ff;
    text-anchor: middle;
}
```
